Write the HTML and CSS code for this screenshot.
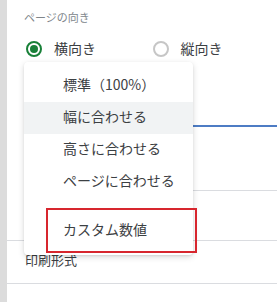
FILE: index.html
```html
<!DOCTYPE html>
<html lang="ja">
<head>
    <meta charset="UTF-8">
    <meta name="viewport" content="width=device-width, initial-scale=1.0">
    <title>印刷設定</title>
    <link rel="stylesheet" href="styles.css">
</head>
<body>
    <div class="panel">
        <!-- Page orientation -->
        <div class="orient">
            <div class="label">ページの向き</div>
            <div class="radios">
                <label class="option">
                    <span class="radio checked"></span>
                    <span>横向き</span>
                </label>
                <label class="option">
                    <span class="radio"></span>
                    <span>縦向き</span>
                </label>
            </div>
        </div>

        <!-- Scale fields (behind the menu) -->
        <div class="field scale"></div>
        <div class="field custom"></div>

        <div class="row">印刷形式</div>
        <div class="row last">ヘッダーとフッター</div>
    </div>

    <!-- Scale dropdown -->
    <ul class="menu">
        <li class="item">標準（100%）</li>
        <li class="item active">幅に合わせる</li>
        <li class="item">高さに合わせる</li>
        <li class="item">ページに合わせる</li>
        <li class="sep"></li>
        <li class="item">カスタム数値</li>
    </ul>

    <!-- Annotation -->
    <div class="highlight-box"></div>
</body>
</html>
```

FILE: styles.css
```css
* {
    box-sizing: border-box;
}

body {
    margin: 0;
    font-family: "Noto Sans CJK JP", "Noto Sans", sans-serif;
    color: #3c4043;
    background-color: #ffffff;
    overflow: hidden;
}

.panel {
    position: relative;
    min-height: 302px;
    border-left: 7px solid #dcdcdc;
    padding-top: 10px;
}

.orient {
    padding-left: 17px;
}

.label {
    font-size: 11px;
    line-height: 14px;
    color: #80868b;
}

.radios {
    display: flex;
    align-items: center;
    margin-top: 15px;
    height: 20px;
}

.option {
    display: flex;
    align-items: center;
    gap: 12px;
    width: 135px;
    padding-left: 2px;
    font-size: 14px;
    line-height: 20px;
}

.option span:last-child {
    margin-top: -2px;
}

.radio {
    position: relative;
    width: 16px;
    height: 16px;
    border: 2px solid #c6c6c6;
    border-radius: 50%;
}

.radio.checked {
    border-color: #188038;
}

.radio.checked::after {
    content: "";
    position: absolute;
    left: 2px;
    top: 2px;
    width: 8px;
    height: 8px;
    border-radius: 50%;
    background-color: #188038;
}

.field {
    margin-left: 17px;
}

.field.scale {
    height: 68px;
    border-bottom: 2px solid #4d7cc4;
}

.field.custom {
    height: 64px;
    border-bottom: 1px solid #dadce0;
    margin-bottom: 49px;
}

.row {
    height: 44px;
    padding-left: 18px;
    border-top: 1px solid #dadce0;
    font-size: 13px;
    line-height: 38px;
    color: #3c4043;
}

.row.last {
    line-height: 20px;
    padding-top: 14px;
}

.row + .row {
    margin-top: -1px;
}

.menu {
    position: absolute;
    left: 24px;
    top: 62px;
    width: 169px;
    margin: 0;
    padding: 8px 0;
    list-style-type: none;
    background-color: #ffffff;
    border-radius: 4px;
    box-shadow: 0 2px 6px rgba(0, 0, 0, 0.15), 0 1px 2px rgba(0, 0, 0, 0.08);
}

.item {
    height: 32px;
    padding-left: 39px;
    font-size: 14px;
    line-height: 28px;
    white-space: nowrap;
}

.item.active {
    background-color: #f1f3f4;
}

.sep {
    height: 17px;
}

.highlight-box {
    position: absolute;
    left: 46px;
    top: 208px;
    width: 151px;
    height: 45px;
    border: 2px solid #d7262e;
}
```
